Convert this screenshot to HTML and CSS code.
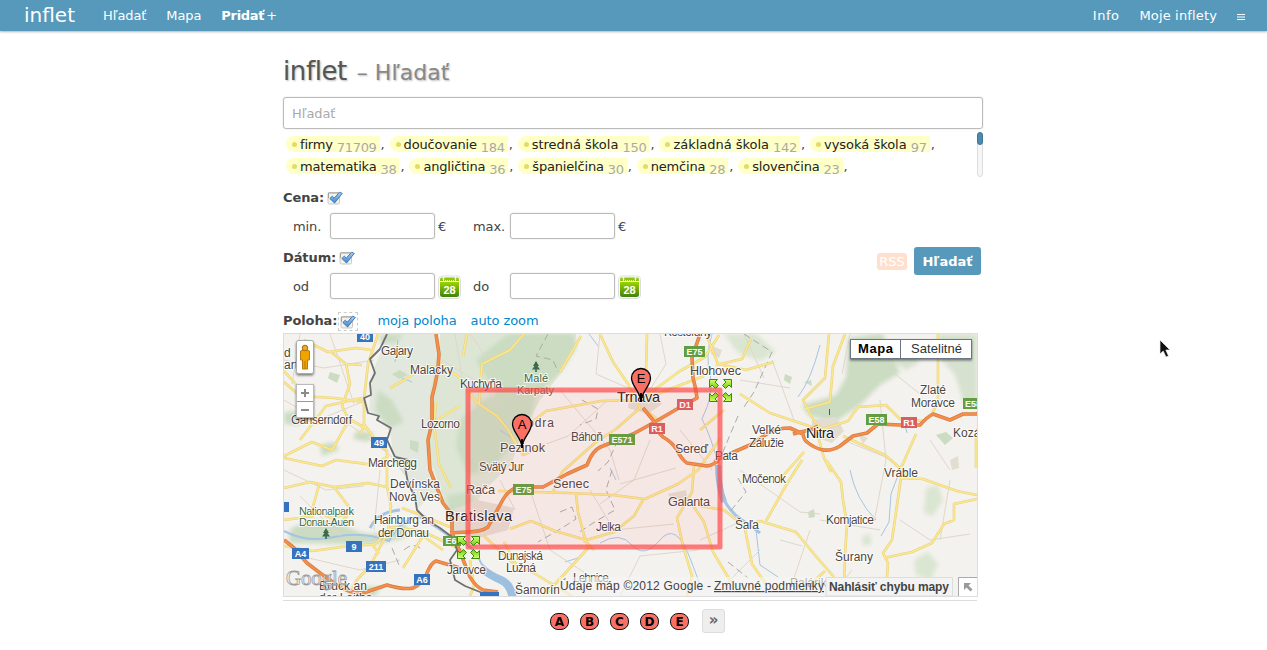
FILE: index.html
```html
<!DOCTYPE html>
<html lang="sk">
<head>
<meta charset="utf-8">
<title>inflet – Hľadať</title>
<link rel="stylesheet" href="styles.css">
</head>
<body>
<svg class="defs" width="0" height="0" aria-hidden="true">
  <defs>
    <linearGradient id="tick-fill" x1="0" y1="0" x2="0" y2="1"><stop offset="0" stop-color="#a8d0f4"/><stop offset="1" stop-color="#3f86d2"/></linearGradient>
    <linearGradient id="cal-fill" x1="0" y1="0" x2="0" y2="1"><stop offset="0" stop-color="#9ad400"/><stop offset="1" stop-color="#40800f"/></linearGradient>
    <symbol id="check" viewBox="0 0 16 14">
      <rect x="1" y="1.5" width="11.500" height="11.500" rx="1.5" fill="#f2f2ee" stroke="#c8c8c0"/>
      <path d="M1.500 7V2h10" fill="none" stroke="#a2a296"/>
      <path d="M2.800 7.500 5.300 5.200 7.200 7.200 12.600 1.200 15.300 2.400 7.600 12Z" fill="url(#tick-fill)" stroke="#3a6fb0" stroke-width=".9"/>
    </symbol>
    <symbol id="calendar" viewBox="0 0 23 24">
      <rect x=".5" y="1" width="22" height="22.5" rx="3.5" fill="#fff" stroke="#ddd"/>
      <path d="M2 7h19v12.500q0 2.500-2.500 2.500h-14Q2 22 2 19.500Z" fill="url(#cal-fill)"/>
      <path d="M2 6V4.500Q2 2.500 4 2.500h15q2 0 2 2V6Z" fill="#8dc40c"/>
      <path d="M5.500 1v4M17.500 1v4" stroke="#f4f8e8" stroke-width="1.500"/>
      <path d="M5 5.500h13" stroke="#e9f5c5" stroke-dasharray="1 1"/>
      <text x="11.500" y="18.500" text-anchor="middle" class="cal-day">28</text>
    </symbol>
  </defs>
</svg>

<header class="topbar">
  <a class="brand">inflet</a>
  <nav class="nav">
    <a>Hľadať</a><a>Mapa</a><a><b>Pridať</b> +</a>
  </nav>
  <nav class="nav nav-right">
    <a>Info</a><a>Moje inflety</a>
    <svg class="menu" viewBox="0 0 8 6" width="8" height="6"><path d="M0 .5h8M0 3h8M0 5.500h8" stroke="#fff" stroke-width="1.200"/></svg>
  </nav>
</header>

<main class="page">
  <h1 class="title">inflet <small>– Hľadať</small></h1>
  <input class="field search" placeholder="Hľadať">
  <div class="tagbox">
    <div class="tags">
      <div class="tagrow">
        <span class="tag">firmy <sub>71709</sub></span><i>,</i>
        <span class="tag">doučovanie <sub>184</sub></span><i>,</i>
        <span class="tag loose">stredná škola <sub>150</sub></span><i>,</i>
        <span class="tag loose">základná škola <sub>142</sub></span><i>,</i>
        <span class="tag loose">vysoká škola <sub>97</sub></span><i>,</i>
      </div>
      <div class="tagrow">
        <span class="tag">matematika <sub>38</sub></span><i>,</i>
        <span class="tag">angličtina <sub>36</sub></span><i>,</i>
        <span class="tag">španielčina <sub>30</sub></span><i>,</i>
        <span class="tag">nemčina <sub>28</sub></span><i>,</i>
        <span class="tag">slovenčina <sub>23</sub></span><i>,</i>
      </div>
    </div>
    <div class="scroll"><div class="thumb"></div></div>
  </div>

  <section class="group">
    <div class="head"><b>Cena:</b><svg class="tick" width="16" height="14"><use href="#check"/></svg></div>
    <div class="row">
      <label>min.</label><input class="field"><span class="unit">€</span>
      <label>max.</label><input class="field"><span class="unit">€</span>
    </div>
  </section>
  <div class="split">
    <section class="group">
      <div class="head"><b>Dátum:</b><svg class="tick" width="16" height="14"><use href="#check"/></svg></div>
      <div class="row">
        <label>od</label><input class="field"><span class="unit"><svg width="23" height="24"><use href="#calendar"/></svg></span>
        <label>do</label><input class="field"><span class="unit"><svg width="23" height="24"><use href="#calendar"/></svg></span>
      </div>
    </section>
    <div class="actions"><a class="rss">RSS</a><button class="submit">Hľadať</button></div>
  </div>
  <div class="head place"><b>Poloha:</b><span class="focus"><svg class="tick" width="16" height="14"><use href="#check"/></svg></span><a class="link">moja poloha</a><a class="link">auto zoom</a></div>

  <div class="map">
  <svg viewBox="284 334 693 262" width="693" height="262">
    <defs>
      <filter id="soft" x="-20%" y="-20%" width="140%" height="140%"><feGaussianBlur stdDeviation="2"/></filter>
      <filter id="drop" x="-20%" y="-20%" width="150%" height="160%"><feDropShadow dx="0" dy="1.500" stdDeviation="1.200" flood-opacity=".5"/></filter>
      <linearGradient id="arrow-fill" x1="0" y1="0" x2="0" y2="1"><stop offset="0" stop-color="#d5ff70"/><stop offset="1" stop-color="#70cf08"/></linearGradient>
      <g id="arrow"><path d="M-11-11h8l-2.500 2.500 3.500 3.500-3 3-3.500-3.500-2.500 2.500Z" fill="url(#arrow-fill)" stroke="#3c8a10" stroke-width="1"/></g>
      <g id="handle"><use href="#arrow"/><use href="#arrow" transform="scale(-1 1)"/><use href="#arrow" transform="scale(1 -1)"/><use href="#arrow" transform="scale(-1 -1)"/></g>
      <g id="pin"><path d="M0 23C-1 13-9.500 8-9.500 0A9.500 9.500 0 0 1 9.500 0C9.500 8 1 13 0 23Z" fill="#fb7064" stroke="#000" stroke-width="1.300"/><path d="M0 24V15" stroke="#000" stroke-width="2"/></g>
      <g id="tree"><path d="M0-6-3-1h1.500L-4 2.500H-.8V5H.8V2.500H4L1.500-1H3Z" fill="#3b6b4b"/></g>
    </defs>
    <rect x="284" y="334" width="693" height="262" fill="#f4f2ee"/>

    <!-- woodland -->
    <g fill="#cbdcc2">
      <path fill="#e2e8de" d="M386 334h51l4 22-9 40-2 58 8 36-20 18-10-28-14-20-4-28-8-12-13-10 4-40 8-18Z"/>
      <path fill="#dde6d5" d="M440 334h136l-2 18-14 22-20 26-16 29-13 36-28 26-14 27-22-9-20-60 3-60 9-36Z"/>
      <g filter="url(#soft)">
        <path d="M508 334h66l2 14-14 22-26 26-8 32-27 30-10 12-23 5-12-28 4-27 20-18 16-8-10-16-10-18 14-12Z"/>
        <path d="M378 390l14 10 12 22-15 6-14-18Z"/><path d="M447 495l24-3 8 20-8 15-22-8Z"/>
        <path d="M284 412l16-1 8 6-10 8-14-1ZM320 445l14-3 5 8-17 6ZM356 431l18 2-6 9-15-3Z"/>
        <path d="M290 529q30-16 60-1t55-9l2 18q-30 9-60 7l-58-1Z"/>
        <path d="M352 586l28 1-4 9h-28ZM380 334l24 1-9 8h-15Z"/>
        <path fill="#dae5d2" d="M724 334h32l20 18-16 9-22-8Z"/>
        <path d="M848 338l34-5 10 22 8 18-20 12-20 20-26 18-26-8-6-10 34-10 10-18Z"/>
        <path fill="#d6e2cf" d="M893 346l15-2 12 18-14 8-12-8ZM938 334h39v75l-14-8-8-26-18-20Z"/>
        <path fill="#dae5d2" d="M926 488l12-3 5 15-10 16-9-3ZM914 560l14-8 10 12-7 16-15-5ZM862 536l8-2 2 10-9 2Z"/>
      </g>
      <path d="M392 374l8-4 8 5-9 4ZM330 372l10 3-3 8-9-5ZM410 440l9 2-1 11-8-4ZM785 374l7 3-2 7-6-4ZM804 382l7-2 1 6ZM808 512l6-3 1 8-6 1ZM936 435l10-3 7 6-8 7Z"/>
    </g>

    <!-- built-up areas -->
    <g fill="#e3dcd1"><path d="M452 510l26-10 36 8-6 22-30 8-24-6Z"/><path d="M630 392l26-2 6 14-14 10-20-6Z"/><path d="M812 420l24-3 8 14-12 12-20-7Z"/><path d="M668 494l18-4 2 12-14 4ZM950 460l8-4 1 12-7 2ZM712 346l10 4-3 8-8-4ZM858 434l10 4-5 6Z"/></g>

    <!-- water -->
    <g fill="none" stroke="#a6c4e4">
      <path stroke-width="2" d="M284 531q22 12 50 6t55 4q12-22 30-24 18 10 34 22 20 4 28 24 16 20 38 30"/>
      <path stroke-width="8" stroke="#9dbfe0" d="M481 568q10 8 20 12t12 20"/><path stroke-width="6" stroke="#9dbfe0" d="M718 465q0 20 6 37"/>
      <path stroke-width="3" d="M400 510q-22 2-30 18M724 500q8 14 18 20t18 13"/>
      <path stroke-width="1" d="M712 334q-7 22-2 40t-8 45q10 20 16 45M820 345q-9 35-22 52M850 470q6 30 26 50M900 470l-9 24-2 28-8 14M756 530l4 35 18 12M398 340l-3 22M589 334l9 12M402 378l10 4M500 430l12 8M610 468l6 12M600 543q20-12 32 2t28-5 30 18 11 30M565 562l16-5M905 425l2 8"/>
    </g>

    <!-- lanes and boundaries -->
    <g fill="none" stroke="#e0d6cb" stroke-width="1">
      <path d="M284 360l40 8 50-8M300 334l-8 50M330 334l24 70M300 420l50 5 40 30 15 20M284 470l42 20 38-4M300 496l40 40M380 470l-6 60M300 556l60 14 40-10M442 360l45 28 12 20M470 334l28 40M530 450l38-14 40-36M560 390l50 60 9 30M600 334l-4 40 46 20M660 334l6 30-20 32M620 484l56-16M590 490l24 40 60-6M530 490l20 60 46 30M620 596l20-40 58-6M700 540l40-18M740 470l60 42 20 2M772 360l22 60M740 380l50 8M850 334l-8 40M880 400l6 60-12 62M820 520l60 10M900 520l30 20 40-6M790 590l20-60M843 440l50 20M930 440l20 30M950 480l-10 60M720 590l40-40M284 400l34 20 44-18M455 334l8 50M420 430l40-10M500 480l15 30M890 370l30 24M744 334l20 44M780 540l22 6M832 596l20-26M680 430l32 40M650 440l-16 40-34 24"/>
    </g>
    <path d="M548 334l-12 22 17 4 5 12M582 400l16 9-2 10-16 6M618 440l-10 22-10 9M612 470l-6 20 9 20-22 13-15 10M560 512l12-5 4 12-14 9-24 14M744 334l28 18-18 40-12 18M738 416l-16 38M738 478l8 14-18 22M728 562l20 16M404 550q10-9 18 0M392 548l7 17" fill="none" stroke="#aaa" stroke-width="1" stroke-dasharray="7 4"/>

    <!-- secondary roads -->
    <g class="road-edge">
      <g id="roads" fill="none" stroke-linejoin="round">
        <path d="M378 334l-10 30-4 35v25l11 16 12 11v35l4 20-3 26-18 34-14 15-8 21"/>
        <path d="M304 340l24 12 28-4 15 2M331 352l15 12 16 1M346 364l4 20-8 22 7 14-17 30-20-8-28 14M284 382l16 14 34 2 30 4M300 440l26-34 36-8M284 371l20 22M309 424l42-4 18 10M284 458l38 8 14-6 38 5 14-9"/>
        <path d="M284 488l26-6 24 5 34-4 19 4M319 485l-7 25 20 8 22-6M334 487l18 24-14 14M284 520l30-4M284 546l28 5 30-4 33-3 17-17 30 4 42 20M372 544l7 10M390 388l14-8 22-14 14 2M403 568l20-32 20 14M364 424l-3 10"/>
        <path d="M440 363l20 15 16 24 21 14 12 15 6 12M479 404l3-40 28-14 14-16M436 402l-2 22 5 40 12 24M432 423l28-17M467 334l-4 22M509 431l14 24 22-10M522 430l24-19 55-10 40-1M560 372l21-36"/>
        <path d="M600 334l13 28 15 22 12 24M647 334l-1 36-7 28M643 398l37-27 25-14 14-22M648 398l30-12 26-10M640 408l-24 21-20 13-34 30-10 22M643 408l18 14M700 430l24-20M706 334l12 30 28 6 28-8M716 365l26-6 9-20M740 394l30 19 30 10 18 6"/>
        <path d="M829 334l-4 44-22 22 10 19 8 10M845 334l-12 32-3 36-25 7M820 430l28-9 10-14 28-2 14 14 24 2M818 436l6 22 7 14M740 394M843 436l24 11 18 8 16 14 7 9M901 478l22 1 34 12 20 4M901 478l-4 27-5 35-9 13 5 10-2 27M884 558l28-6 20-9 12-19 10-4V504l23-5M976 438v30M901 468l15-34M938 334v68l-7 14M804 452l-22 25"/>
        <path d="M826 460l15 22 2 18 4 24-2 30-1 42M802 460l-14 22-22 39"/>
        <path d="M498 491l70 2 45 2 32 4 33-15 20-14 22-31M510 529l21-8 24 10 28 8 11 11M576 494l2 18 6 23 4 12M583 541l31-9 20-16 9-16M484 536l30 28 18 8 40 24M590 546l-44 48M504 542l13 24M694 466l-2 26-15 26 6 28 9 30-5 20M692 504l12 18 9 30 18 30M700 506l24 4 20 16 16-5 36 11 18 22 20 23"/>
        <path d="M744 524l8 40 14 20M825 571l-22 20M470 560l4 26-4 10M450 527l-24-10-24-9"/>
      </g>
    </g>
    <use href="#roads" class="road-core"/>

    <!-- motorways -->
    <g class="motor-edge">
      <g id="motorways" fill="none" stroke-linejoin="round">
        <path d="M436 334l3 20q-1 22-7 43v26l-4 17 2 30 13 33 9 12v18l6 14 12 30q5 9 13 13l15 2"/>
        <path d="M450 533l17-1q14 0 21-5l12-22q8-17 20-18h23l24-13 20-9q6-16 16-19l30-12 20-11 24-14 20-11q-1-10-4-20l-1-20 8-24"/>
        <path d="M643 408l10 12q4 12 10 17 9 5 14 13 5 10 10 13l20 3q8-1 13-8l30-13 20-13q8-4 20-4l13 6q1 6 4 8 7 6 16 8 9 1 17-4l13-10 14-3 11-9 22 1h20q7-8 13-11l17 6 13-6h14l8-6"/>
        <path d="M793 434l20-5 5-3M284 540l9 7 14 16 13 10 17 12q11 8 26 8l24-8q16 5 26 3 10-4 14-15 4-10 9-12l24 7M715 462l5-6"/>
      </g>
    </g>
    <use href="#motorways" class="motor-core"/>
    <path d="M387 334l-7 15-10 10 5 14-5 10 1 12-7 3 4 15 11 3-2 4 14 8-4 12 8 17 13 3-3 7 3 16 7 14 2 13 10 10 13 8 12 9 5 13-7 10 5 20 10 6 20 8" fill="none" stroke="#707070" stroke-width="1.800" stroke-linejoin="round"/>

    <!-- road shields -->
    <g class="shield">
      <g fill="#3673bf"><path d="M357 331h16v11h-16ZM371 437h16v11h-16ZM346 541h16v11h-16ZM292 548h17v11h-17ZM366 561h20v11h-20ZM414 574h16v11h-16ZM284 502h5v10h-5ZM480 592h19v4h-19Z"/></g>
      <g fill="#629e41"><path d="M684 346h21v11h-21ZM609 434h26v11h-26ZM513 484h21v11h-21ZM866 414h21v11h-21ZM963 398h14v11h-14ZM443 536h18v10h-18Z"/></g>
      <g fill="#d95d61"><path d="M677 399h16v11h-16ZM649 423h16v11h-16ZM901 417h16v11h-16Z"/></g>
      <text x="365" y="340">40</text><text x="379" y="446">49</text><text x="354" y="550">9</text><text x="300.500" y="557">A4</text><text x="376" y="570">211</text><text x="422" y="583">A6</text>
      <text x="694.500" y="355">E75</text><text x="622" y="443">E571</text><text x="523.500" y="493">E75</text><text x="876.500" y="423">E58</text><text x="973" y="407">E58</text><text x="451" y="544">E6</text>
      <text x="685" y="408">D1</text><text x="657" y="432">R1</text><text x="909" y="426">R1</text>
    </g>

    <!-- place names -->
    <g class="town">
      <text x="381" y="355" textLength="32">Gajary</text><text x="410" y="374" textLength="43">Malacky</text><text x="460" y="388" textLength="42">Kuchyňa</text>
      <text x="291" y="424" textLength="61">Gänserndorf</text><text x="421" y="428" textLength="39">Lozorno</text><text x="368" y="467" textLength="49">Marchegg</text>
      <text x="284" y="357">d</text><text x="284" y="369">art</text>
      <text x="390" y="488" textLength="50">Devínska</text><text x="389" y="501" textLength="51">Nová Ves</text><text class="mid" x="466" y="494" textLength="29">Rača</text><text x="479" y="471" textLength="45">Svätý Jur</text>
      <text x="374" y="524" textLength="60">Hainburg an</text><text x="378" y="537" textLength="51">der Donau</text><text x="447" y="574" textLength="39">Jarovce</text><text x="319" y="590" textLength="48">Bruck an</text><text x="319" y="602">der Leitha</text>
      <text class="mid" x="500" y="452" textLength="45">Pezinok</text><text x="516" y="427" textLength="38">Modra</text><text x="571" y="441" textLength="32">Báhoň</text><text x="664" y="336" textLength="48">Kostoľany</text><text class="mid" x="690" y="375" textLength="51">Hlohovec</text>
      <text class="mid" x="675" y="453" textLength="33">Sereď</text><text x="715" y="460" textLength="23">Pata</text><text x="752" y="434" textLength="29">Veľké</text><text x="749" y="447" textLength="35">Zálužie</text>
      <text x="920" y="394" textLength="26">Zlaté</text><text x="911" y="407" textLength="44">Moravce</text><text x="953" y="437">Kozárovce</text><text x="884" y="477" textLength="34">Vráble</text>
      <text class="mid" x="553" y="488" textLength="36">Senec</text><text x="596" y="531" textLength="25">Jelka</text><text class="mid" x="668" y="506" textLength="42">Galanta</text><text x="742" y="483" textLength="44">Močenok</text><text x="735" y="529" textLength="24">Šaľa</text>
      <text x="826" y="524" textLength="48">Komjatice</text><text x="835" y="561" textLength="38">Šurany</text><text x="498" y="560" textLength="45">Dunajská</text><text x="506" y="572" textLength="30">Lužná</text><text x="573" y="582" textLength="36">Lehnice</text><text x="515" y="594" textLength="45">Šamorín</text><text x="790" y="587">Palárikovo</text>
      <text class="city" x="445" y="521" textLength="67">Bratislava</text><text class="city" x="617" y="402" textLength="43">Trnava</text><text class="city" x="806" y="438" textLength="28">Nitra</text>
      <g class="park"><text x="299" y="515" textLength="55">Nationalpark</text><text x="299" y="526" textLength="55">Donau-Auen</text><text x="524" y="382" textLength="24">Malé</text><text x="517" y="394" textLength="37">Karpaty</text></g>
    </g>
    <use href="#tree" x="326" y="534"/><use href="#tree" x="536" y="367"/>
    <path d="M829.500 409v6" stroke="#555"/>

    <!-- search area -->
    <rect x="468" y="390" width="252" height="157" fill="#f66" fill-opacity=".07" stroke="#f44" stroke-opacity=".68" stroke-width="5" stroke-linejoin="round"/>
    <use href="#handle" x="720.500" y="390.500"/><use href="#handle" x="468.500" y="547.500"/>
    <use href="#pin" x="522" y="424"/><use href="#pin" x="641" y="378"/>
    <g class="pin-letter"><text x="522" y="429">A</text><text x="641" y="383">E</text></g>

    <!-- map controls -->
    <g filter="url(#drop)">
      <rect x="296.500" y="340.500" width="17" height="33" rx="2" fill="#fff" stroke="#aaa"/>
      <rect x="296.500" y="384.500" width="17" height="33" fill="#fff" stroke="#bbb"/>
      <rect x="850.500" y="339.500" width="121" height="19" fill="#fff" stroke="#6b7686"/>
    </g>
    <path d="M297 401.500h16" stroke="#999"/><path d="M301 393h8M305 389v8M301 410h8" stroke="#8c8c8c" stroke-width="2"/>
    <path d="M300.500 351q4.500-3 9 0v9h-2v9h-5v-9h-2Z" fill="#f0a400" stroke="#b87911"/><path d="M305 361v8" stroke="#b87911"/><circle cx="305" cy="348" r="2.800" fill="#edaa24" stroke="#a66d16"/>
    <path d="M900.500 340v18" stroke="#6b7686"/>
    <g class="map-type"><text x="858" y="353" textLength="35" font-weight="bold" fill="#000">Mapa</text><text x="911" y="353" textLength="51" fill="#333">Satelitné</text></g>
    <text class="glogo" x="286" y="585" textLength="61">Google</text>
    <path d="M559 577h268v19H559Z" fill="#f5f5f5" fill-opacity=".6"/><path d="M826 577.500h126.500V596H826Z" fill="#f3f3f3" stroke="#ddd"/>
    <g class="legal"><text x="560" y="590" textLength="151">Údaje máp ©2012 Google -</text><text x="714" y="590" textLength="110" text-decoration="underline">Zmluvné podmienky</text><text x="829" y="591" textLength="120" font-weight="bold">Nahlásiť chybu mapy</text></g>
    <rect x="958.500" y="577.500" width="19" height="19" fill="#fff" stroke="#aaa"/><path d="M964 583h7l-2.500 2.500 4 4-2 2-4-4L964 590Z" fill="#999"/>
  </svg>
  </div>
  <div class="pager">
    <a class="pill">A</a><a class="pill">B</a><a class="pill">C</a><a class="pill">D</a><a class="pill">E</a><a class="next">»</a>
  </div>
</main>
<svg class="cursor" width="14" height="20" viewBox="0 0 14 20"><path d="M1 1v14l3.200-3 2.800 6 2.500-1-2.700-6H11Z" fill="#111" stroke="#eee" stroke-width=".7"/></svg>
</body>
</html>
```
FILE: styles.css
```css
* { box-sizing: border-box; }
body { margin: 0; height: 650px; overflow: hidden; background: #fff; color: #444; font: 13px/20px Verdana, "DejaVu Sans", sans-serif; }
.defs { position: absolute; }
.topbar { display: flex; align-items: center; height: 31px; padding: 0 22px 0 24px; background: #5699bb; color: #fff; box-shadow: 0 1px 2px rgba(0,0,0,.3); }
.brand { width: 79px; font-size: 20px; line-height: 31px; }
.nav { display: flex; align-items: center; gap: 20px; letter-spacing: -.1px; }
.nav b { letter-spacing: -.3px; margin-right: -2px; }
.nav a { white-space: nowrap; }
.nav-right { margin-left: auto; letter-spacing: .15px; }
.nav-right a:first-child { letter-spacing: .5px; }
.menu { margin: 2px 0 0; }
.page { width: 700px; margin-left: 283px; padding-top: 26px; }
.title { margin: 0; height: 40px; font-size: 26px; line-height: 29px; font-weight: normal; letter-spacing: -.4px; color: #555; text-shadow: 1px 1px 2px #bbb; }
.title small { margin-left: 2px; font-size: 22px; color: #888; letter-spacing: .05px; }
.field { display: block; width: 105px; height: 26px; border: 1px solid #bbb; border-radius: 3px; background: #fff; font: inherit; padding: 0 8px; box-shadow: 0 0 2px #ddd; }
.field::placeholder { color: #aaa; opacity: 1; letter-spacing: -.1px; }
.search { width: 700px; height: 32px; }
.tagbox { display: flex; justify-content: space-between; height: 48px; padding-top: 3px; }
.tags { padding: 4px 0 0 3px; }
.tagrow { display: flex; height: 22px; white-space: nowrap; }
.tag { position: relative; height: 16px; padding: 0 3px 0 14px; border-radius: 8px 0 0 8px; background: #ffffc8; color: #222; line-height: 18px; letter-spacing: -.18px; }
.tag.loose { letter-spacing: -.02px; }
.tag::before { content: ""; position: absolute; left: 6px; top: 6px; width: 5px; height: 5px; border-radius: 50%; background: #e2dc68; }
.tag sub { color: #aaa; font-size: 13px; line-height: 0; vertical-align: -3px; letter-spacing: -.3px; }
.tagrow i { width: 10px; padding-left: 1px; line-height: 18px; font-style: normal; }
.scroll { width: 6px; height: 45px; border: 1px solid #ddd; border-radius: 3px; background: #f6f6f6; }
.thumb { width: 6px; height: 13px; margin: -1px; border-radius: 3px; background: #4b8cae; border: 1px solid #3d7797; }
.group { padding-top: 11px; }
.head { display: flex; align-items: center; height: 20px; letter-spacing: -.1px; }
.tick { display: block; margin-left: 3px; }
.row { display: flex; align-items: center; height: 26px; margin-top: 5px; padding-left: 10px; }
.row label { width: 37px; padding-top: 2px; letter-spacing: -.1px; }
.unit { display: flex; align-items: center; width: 38px; height: 26px; padding: 1px 0 0 3px; }
.unit svg { flex: none; margin: 1px 0 0; }
.cal-day { font: bold 11px "Liberation Sans", sans-serif; fill: #fff; }
.split { display: flex; justify-content: space-between; padding-right: 2px; margin-top: -2px; }
.actions { display: flex; align-items: center; gap: 7px; height: 28px; margin-top: 10px; }
.rss { width: 30px; height: 17px; border-radius: 3px; background: #ffdfce; color: #fff; line-height: 17px; text-align: center; }
.submit { width: 67px; height: 28px; padding: 0; border: 0; border-radius: 3px; background: #5699bb; color: #fff; font: bold 13px Verdana, "DejaVu Sans", sans-serif; }
.place { margin-top: 12px; margin-bottom: 2px; }
.focus { width: 20px; height: 19px; border: 1px dashed #ccc; padding-top: 2px; margin: 1px 19px 0 1px; }
.focus .tick { margin-left: 1px; }
.link { color: #08c; margin-right: 14px; letter-spacing: -.1px; }
.map { width: 695px; height: 264px; border: 1px solid #ddd; overflow: hidden; }
.map svg { display: block; }
.road-edge { stroke: #e6cf80; stroke-width: 2.6px; }
.road-core { stroke: #fbe88c; stroke-width: 1.6px; }
.motor-edge { stroke: #d57c42; stroke-width: 3.6px; }
.motor-core { stroke: #f58e4a; stroke-width: 2.2px; }
.shield text { font: bold 9px "Liberation Sans", sans-serif; fill: #fff; text-anchor: middle; }
.town { font: 12px "Liberation Sans", sans-serif; fill: #4c453e; stroke: #fff; stroke-opacity: .8; stroke-width: 2px; paint-order: stroke; }
.town .mid { font-size: 12.7px; }
.town .city { font-size: 14.5px; fill: #222; }
.town .park { font-size: 11px; fill: #376849; }
.pin-letter { font: 13px "Liberation Sans", sans-serif; text-anchor: middle; }
.map-type { font: 13px "Liberation Sans", sans-serif; }
.glogo { font: 21px "Liberation Serif", serif; fill: #fff; fill-opacity: .8; stroke: #999; stroke-width: .8px; }
.legal { font: 12px "Liberation Sans", sans-serif; fill: #444; }
.pager { display: flex; align-items: center; gap: 11px; width: 694px; height: 36px; margin-top: 3px; padding: 5px 0 0 267px; border-top: 1px solid #ddd; }
.pill { width: 19px; height: 17px; border: 1px solid #111; border-radius: 8px; background: #fb7064; color: #000; font-weight: bold; font-size: 12px; line-height: 16px; text-align: center; }
.next { width: 23px; height: 24px; margin-left: 2px; border: 1px solid #ddd; border-radius: 3px; background: #eee; font-size: 15px; font-weight: bold; line-height: 21px; text-align: center; color: #666; }
.cursor { position: absolute; left: 1159px; top: 339px; }
```
